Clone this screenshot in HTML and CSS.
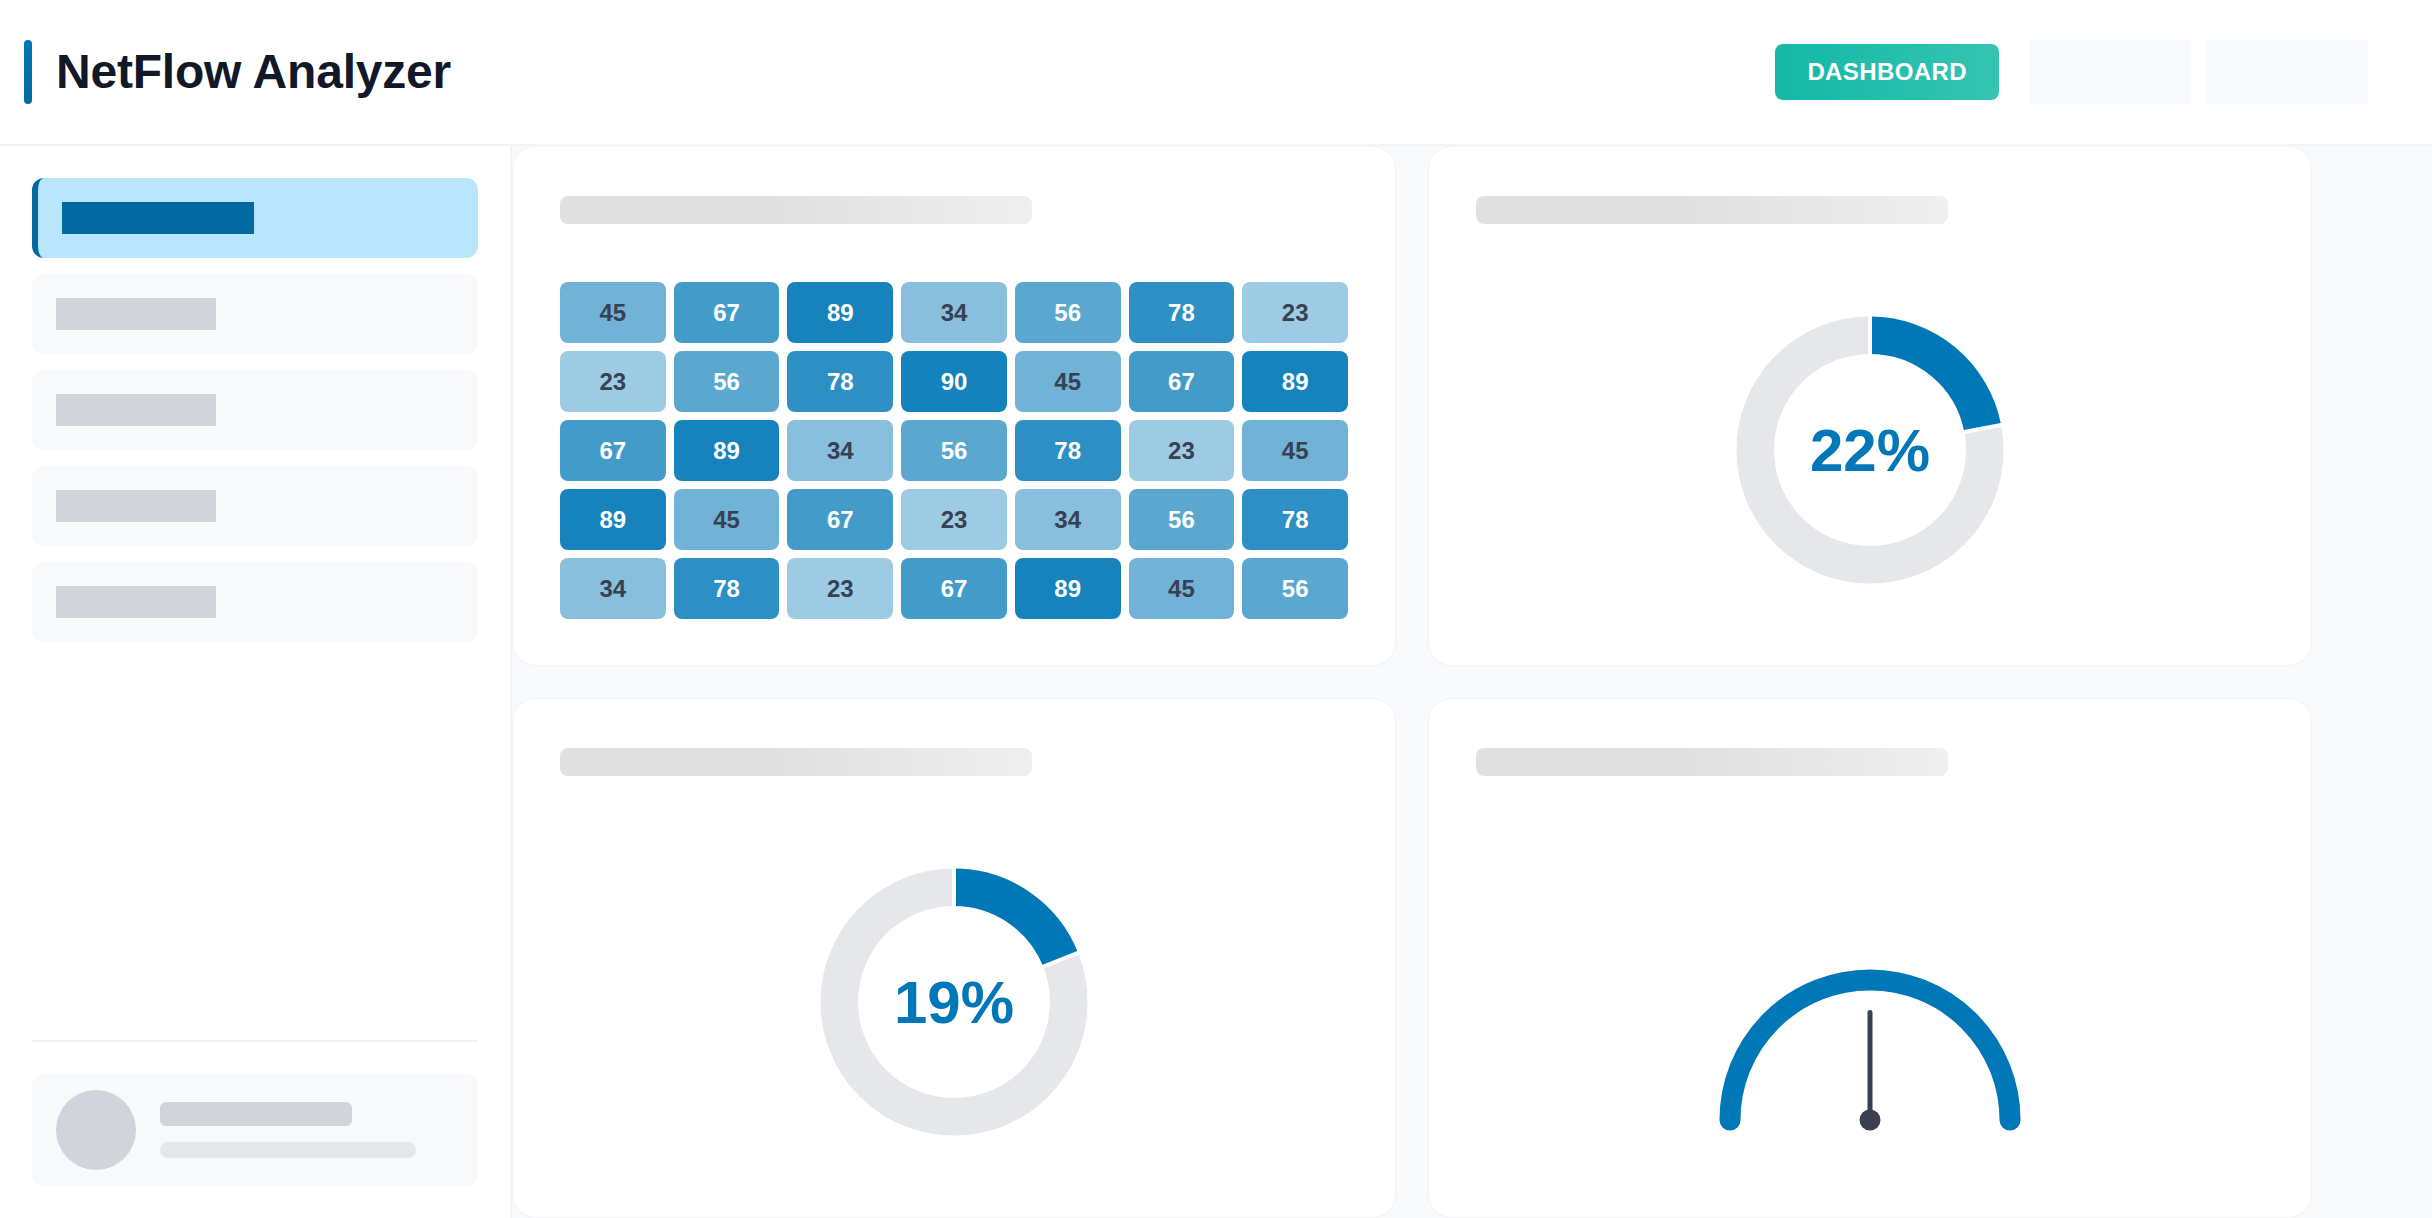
FILE: index.html
```html
<!DOCTYPE html>
<html lang="en">
<head>
<meta charset="utf-8">
<title>NetFlow Analyzer</title>
<link rel="stylesheet" href="styles.css">
</head>
<body>
<header class="topbar">
  <div class="brand">
    <span class="brand-accent"></span>
    <h1 class="brand-title">NetFlow Analyzer</h1>
  </div>
  <nav class="top-actions">
    <button class="btn-primary">DASHBOARD</button>
    <span class="top-placeholder"></span>
    <span class="top-placeholder"></span>
  </nav>
</header>
<div class="layout">
  <aside class="sidebar">
    <ul class="nav">
      <li class="nav-item active"><span class="nav-bar"></span></li>
      <li class="nav-item"><span class="nav-bar"></span></li>
      <li class="nav-item"><span class="nav-bar"></span></li>
      <li class="nav-item"><span class="nav-bar"></span></li>
      <li class="nav-item"><span class="nav-bar"></span></li>
    </ul>
    <div class="sidebar-footer">
      <div class="user-card">
        <span class="avatar"></span>
        <div class="user-lines">
          <span class="user-line-1"></span>
          <span class="user-line-2"></span>
        </div>
      </div>
    </div>
  </aside>
  <main class="main">
    <section class="card">
      <div class="card-title"></div>
      <div class="heatmap">
        <div class="cell v45">45</div><div class="cell v67">67</div><div class="cell v89">89</div><div class="cell v34">34</div><div class="cell v56">56</div><div class="cell v78">78</div><div class="cell v23">23</div>
        <div class="cell v23">23</div><div class="cell v56">56</div><div class="cell v78">78</div><div class="cell v90">90</div><div class="cell v45">45</div><div class="cell v67">67</div><div class="cell v89">89</div>
        <div class="cell v67">67</div><div class="cell v89">89</div><div class="cell v34">34</div><div class="cell v56">56</div><div class="cell v78">78</div><div class="cell v23">23</div><div class="cell v45">45</div>
        <div class="cell v89">89</div><div class="cell v45">45</div><div class="cell v67">67</div><div class="cell v23">23</div><div class="cell v34">34</div><div class="cell v56">56</div><div class="cell v78">78</div>
        <div class="cell v34">34</div><div class="cell v78">78</div><div class="cell v23">23</div><div class="cell v67">67</div><div class="cell v89">89</div><div class="cell v45">45</div><div class="cell v56">56</div>
      </div>
    </section>
    <section class="card">
      <div class="card-title"></div>
      <div class="donut-wrap">
        <div class="donut">
          <svg width="268" height="268" viewBox="0 0 268 268">
            <circle cx="134" cy="134" r="114.75" fill="none" stroke="#e5e7eb" stroke-width="37.5"/>
            <circle cx="134" cy="134" r="114.75" fill="none" stroke="#0077b6" stroke-width="37.5" stroke-dasharray="158.62 720.99" transform="rotate(-90 134 134)"/>
            <line x1="134" y1="-2" x2="134" y2="42" stroke="#ffffff" stroke-width="4"/>
            <line x1="134" y1="-2" x2="134" y2="42" stroke="#ffffff" stroke-width="4" transform="rotate(79.2 134 134)"/>
          </svg>
          <span class="donut-label">22%</span>
        </div>
      </div>
    </section>
    <section class="card">
      <div class="card-title"></div>
      <div class="donut-wrap">
        <div class="donut">
          <svg width="268" height="268" viewBox="0 0 268 268">
            <circle cx="134" cy="134" r="114.75" fill="none" stroke="#e5e7eb" stroke-width="37.5"/>
            <circle cx="134" cy="134" r="114.75" fill="none" stroke="#0077b6" stroke-width="37.5" stroke-dasharray="136.99 720.99" transform="rotate(-90 134 134)"/>
            <line x1="134" y1="-2" x2="134" y2="42" stroke="#ffffff" stroke-width="4"/>
            <line x1="134" y1="-2" x2="134" y2="42" stroke="#ffffff" stroke-width="4" transform="rotate(68.4 134 134)"/>
          </svg>
          <span class="donut-label">19%</span>
        </div>
      </div>
    </section>
    <section class="card">
      <div class="card-title"></div>
      <div class="gauge-wrap">
        <svg class="gauge" width="302" height="162" viewBox="0 0 302 162">
          <path d="M 11 151 A 140 140 0 0 1 291 151" fill="none" stroke="#0077b6" stroke-width="21" stroke-linecap="round"/>
          <line x1="151" y1="151" x2="151" y2="43.5" stroke="#374151" stroke-width="5" stroke-linecap="round"/>
          <circle cx="151" cy="151" r="10.5" fill="#374151"/>
        </svg>
      </div>
    </section>
  </main>
</div>
</body>
</html>
```
FILE: styles.css
```css
* { box-sizing: border-box; }
html, body { margin: 0; padding: 0; }
body {
  font-family: "Liberation Sans", Arial, sans-serif;
  background: #ffffff;
  color: #111827;
  height: 1218px;
  overflow: hidden;
}

.topbar {
  height: 146px;
  border-bottom: 2px solid #f3f4f6;
  display: flex;
  align-items: center;
  justify-content: space-between;
  padding: 0 64px 0 24px;
  background: #ffffff;
}
.brand { display: flex; align-items: center; gap: 24px; }
.brand-accent {
  width: 8px;
  height: 64px;
  border-radius: 4px;
  background: linear-gradient(180deg, #0077b6, #0369a1);
}
.brand-title {
  margin: 0;
  font-size: 48px;
  font-weight: 700;
  letter-spacing: -0.2px;
  color: #111827;
  line-height: 1;
}
.top-actions { display: flex; align-items: center; gap: 16px; }
.btn-primary {
  height: 56px;
  padding: 0 32px;
  margin-right: 15px;
  border: none;
  border-radius: 8px;
  background: linear-gradient(90deg, #14b8a6, #35c4b2);
  color: #ffffff;
  font-family: "Liberation Sans", Arial, sans-serif;
  font-size: 24px;
  font-weight: 700;
  letter-spacing: 0.4px;
}
.top-placeholder {
  width: 161px;
  height: 64px;
  background: #f8f9fb;
}

.layout { display: flex; height: 1072px; }
.sidebar {
  width: 512px;
  flex: none;
  border-right: 2px solid #f3f4f6;
  padding: 32px;
  display: flex;
  flex-direction: column;
  justify-content: space-between;
  background: #ffffff;
}
.nav {
  list-style: none;
  margin: 0;
  padding: 0;
  display: flex;
  flex-direction: column;
  gap: 16px;
}
.nav-item {
  height: 80px;
  border-radius: 12px;
  background: #f8f9fb;
  padding: 0 24px;
  display: flex;
  align-items: center;
}
.nav-bar {
  width: 160px;
  height: 32px;
  background: #d1d5db;
}
.nav-item.active {
  background: #bae6fd;
  border-left: 6px solid #0369a1;
}
.nav-item.active .nav-bar {
  width: 192px;
  background: #0369a1;
}
.sidebar-footer {
  border-top: 2px solid #f3f4f6;
  padding-top: 32px;
}
.user-card {
  height: 112px;
  border-radius: 12px;
  background: #f8f9fb;
  padding: 16px 24px;
  display: flex;
  align-items: center;
  gap: 24px;
}
.avatar {
  width: 80px;
  height: 80px;
  border-radius: 50%;
  background: #d1d5db;
  flex: none;
}
.user-lines { display: flex; flex-direction: column; gap: 16px; }
.user-line-1 {
  width: 192px;
  height: 24px;
  border-radius: 6px;
  background: #d1d5db;
}
.user-line-2 {
  width: 256px;
  height: 16px;
  border-radius: 8px;
  background: #e5e7eb;
}

.main {
  flex: 1;
  background: #f9fafb;
  display: grid;
  grid-template-columns: 884px 884px;
  grid-auto-rows: 520px;
  gap: 32px;
  align-content: start;
  overflow: hidden;
}
.card {
  background: #ffffff;
  border: 1px solid #f3f4f6;
  border-radius: 24px;
  box-shadow: 0 1px 3px rgba(0, 0, 0, 0.02);
  padding: 49px 47px 47px;
  display: flex;
  flex-direction: column;
}
.card-title {
  width: 472px;
  height: 28px;
  border-radius: 8px;
  background: linear-gradient(90deg, #e0e0e0 0%, #e0e0e0 45%, #efefef 100%);
  flex: none;
}

.heatmap {
  margin-top: 58px;
  display: grid;
  grid-template-columns: repeat(7, 1fr);
  grid-auto-rows: 61px;
  gap: 8px;
}
.cell {
  border-radius: 8px;
  display: flex;
  align-items: center;
  justify-content: center;
  font-size: 24px;
  font-weight: 700;
  color: #ffffff;
}
.v23 { background: rgba(0, 119, 182, 0.384); color: #374151; }
.v34 { background: rgba(0, 119, 182, 0.472); color: #374151; }
.v45 { background: rgba(0, 119, 182, 0.56); color: #374151; }
.v56 { background: rgba(0, 119, 182, 0.648); }
.v67 { background: rgba(0, 119, 182, 0.736); }
.v78 { background: rgba(0, 119, 182, 0.824); }
.v89 { background: rgba(0, 119, 182, 0.912); }
.v90 { background: rgba(0, 119, 182, 0.92); }

.donut-wrap {
  margin-top: 92px;
  display: flex;
  justify-content: center;
}
.donut {
  position: relative;
  width: 268px;
  height: 268px;
}
.donut svg { display: block; }
.donut-label {
  position: absolute;
  inset: 0;
  display: flex;
  align-items: center;
  justify-content: center;
  font-size: 60px;
  font-weight: 700;
  color: #0077b6;
}

.gauge-wrap {
  margin-top: 193px;
  display: flex;
  justify-content: center;
}
.gauge { display: block; }
```
